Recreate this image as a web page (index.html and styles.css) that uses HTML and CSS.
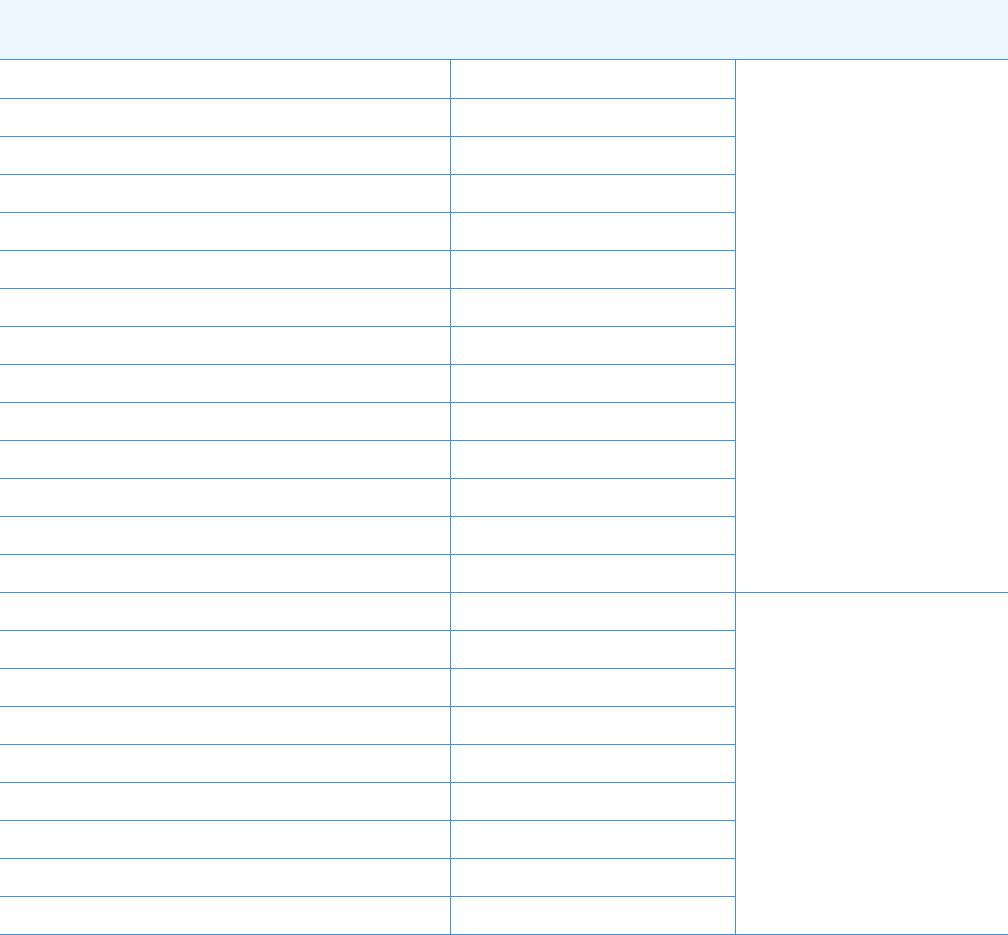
FILE: index.html
```html
<!DOCTYPE html>
<html lang="en">

<head>
  <meta charset="UTF-8">
  <meta name="viewport" content="width=device-width, initial-scale=1.0">
  <title>Schedule Table</title>
  <link rel="stylesheet" href="styles.css">
</head>

<body>
  <div class="table-container">
    <table class="grid-table">
      <thead>
        <tr>
          <th class="col-main"></th>
          <th class="col-mid"></th>
          <th class="col-side"></th>
        </tr>
      </thead>
      <tbody>
        <tr class="first-row"><td></td><td></td><td class="group" rowspan="14"></td></tr>
        <tr><td></td><td></td></tr>
        <tr><td></td><td></td></tr>
        <tr><td></td><td></td></tr>
        <tr><td></td><td></td></tr>
        <tr><td></td><td></td></tr>
        <tr><td></td><td></td></tr>
        <tr><td></td><td></td></tr>
        <tr><td></td><td></td></tr>
        <tr><td></td><td></td></tr>
        <tr><td></td><td></td></tr>
        <tr><td></td><td></td></tr>
        <tr><td></td><td></td></tr>
        <tr><td></td><td></td></tr>
        <tr><td></td><td></td><td class="group" rowspan="9"></td></tr>
        <tr><td></td><td></td></tr>
        <tr><td></td><td></td></tr>
        <tr><td></td><td></td></tr>
        <tr><td></td><td></td></tr>
        <tr><td></td><td></td></tr>
        <tr><td></td><td></td></tr>
        <tr><td></td><td></td></tr>
        <tr><td></td><td></td></tr>
      </tbody>
    </table>
  </div>
</body>

</html>
```

FILE: styles.css
```css
body {
  font-family: 'Liberation Sans', Arial, sans-serif;
  margin: 0;
  background-color: white;
  color: #333;
}

.table-container {
  width: 100%;
}

.grid-table {
  width: 100%;
  table-layout: fixed;
  border-collapse: separate;
  border-spacing: 0;
}

.col-main {
  width: 451px;
}

.col-mid {
  width: 285px;
}

th {
  height: 60px;
  padding: 0;
  box-sizing: border-box;
  background-color: #eef6fe;
  border-bottom: 1px solid #3b93e3;
}

td {
  height: 38px;
  padding: 0;
  box-sizing: border-box;
  border-bottom: 1px solid #3b93e3;
  border-right: 1px solid #3b93e3;
}

.first-row td {
  height: 39px;
}

td.group {
  height: auto;
  border-right: none;
  vertical-align: top;
}
```
